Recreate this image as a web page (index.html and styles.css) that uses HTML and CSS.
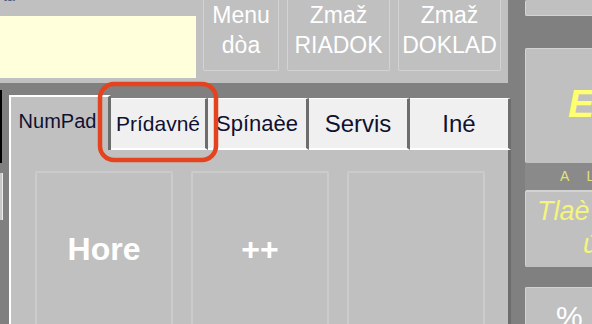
FILE: index.html
```html
<!DOCTYPE html>
<html>
<head>
<meta charset="utf-8">
<link rel="stylesheet" href="styles.css">
</head>
<body>
<div class="screen">
  <div class="main">
    <div class="top">
      <div class="info">
        <div class="caption"><span>ta</span></div>
        <div class="display"></div>
      </div>
      <div class="topbtns">
        <div class="tbtn w76">Menu<br>dòa</div>
        <div class="tbtn w103">Zmaž<br>RIADOK</div>
        <div class="tbtn w103">Zmaž<br>DOKLAD</div>
      </div>
    </div>
    <div class="lower">
      <div class="edge">
        <div class="edge-black"></div>
        <div class="edge-btn"></div>
      </div>
      <div class="tabpanel">
        <div class="tabs">
          <div class="tab active t20">NumPad</div>
          <div class="tab w97 t21">Prídavné</div>
          <div class="tab w101 t22">Spínaèe</div>
          <div class="tab w101 t24">Servis</div>
          <div class="tab w101 t24 last">Iné</div>
        </div>
        <div class="pad">
          <div class="key">Hore</div>
          <div class="key">++</div>
          <div class="key"></div>
        </div>
      </div>
    </div>
  </div>
  <div class="side">
    <div class="sbtn s1"></div>
    <div class="sbtn s2"><span class="big-e">E</span></div>
    <div class="band">A L</div>
    <div class="sbtn s3">
      <div class="tl1">Tlaè</div>
      <div class="tl2">účtu</div>
    </div>
    <div class="sbtn s4"><span class="pct">%</span></div>
  </div>
</div>
<svg class="mark" width="592" height="324" viewBox="0 0 592 324">
  <rect x="100" y="84" width="116" height="76" rx="14" ry="14" fill="none" stroke="#e4431f" stroke-width="4.5"/>
</svg>
</body>
</html>
```

FILE: styles.css
```css
html, body {
  margin: 0;
  padding: 0;
}
body {
  width: 592px;
  height: 324px;
  overflow: hidden;
  background: #808080;
  font-family: "Liberation Sans", Arial, sans-serif;
  position: relative;
}
.screen {
  display: flex;
  width: 592px;
  height: 324px;
  overflow: hidden;
  background: #808080;
}
.main {
  width: 511px;
  flex-shrink: 0;
  display: flex;
  flex-direction: column;
}
.top {
  width: 508px;
  height: 83px;
  flex-shrink: 0;
  background: #c0c0c0;
  display: flex;
  align-items: flex-start;
}
.info {
  width: 196px;
  flex-shrink: 0;
}
.caption {
  height: 16px;
  overflow: hidden;
}
.caption span {
  display: block;
  margin-top: -11px;
  padding-left: 3px;
  font-size: 14px;
  line-height: 14px;
  color: #4f5c86;
}
.display {
  height: 62px;
  background: #ffffdc;
}
.topbtns {
  display: flex;
  gap: 8px;
  margin-left: 7px;
}
.tbtn {
  box-sizing: border-box;
  height: 71px;
  border: 1px solid #d3d3d3;
  border-top: none;
  border-radius: 0 0 2px 2px;
  color: #ffffff;
  font-size: 23px;
  line-height: 30px;
  text-align: center;
  padding-top: 0;
}
.w76 { width: 76px; }
.w103 { width: 103px; }

.lower {
  margin-top: 12px;
  display: flex;
  flex: 1;
}
.edge {
  width: 9px;
  flex-shrink: 0;
  display: flex;
  flex-direction: column;
}
.edge-black {
  width: 2px;
  height: 73px;
  margin-top: -5px;
  flex-shrink: 0;
  background: #000000;
}
.edge-btn {
  width: 2px;
  height: 47px;
  margin-top: 10px;
  flex-shrink: 0;
  background: #c8c8c8;
  border-right: 1px solid #ececec;
}
.tabpanel {
  width: 502px;
  flex-shrink: 0;
  display: flex;
  flex-direction: column;
}
.tabs {
  display: flex;
  height: 55px;
  flex-shrink: 0;
  align-items: flex-end;
}
.tab {
  box-sizing: border-box;
  height: 52px;
  background: #f0f0f0;
  border-top: 1px solid #ffffff;
  border-right: 3px solid #6d6d6d;
  border-bottom: 2px solid #ffffff;
  color: #101030;
  display: flex;
  align-items: center;
  justify-content: center;
  white-space: nowrap;
  padding-top: 1px;
}
.tab.active {
  width: 102px;
  height: 55px;
  background: #c0c0c0;
  border-top: 2px solid #ffffff;
  border-left: 2px solid #ffffff;
  border-bottom: none;
  padding-bottom: 6px;
  padding-right: 4px;
}
.w97 { width: 97px; }
.w101 { width: 101px; }
.t20 { font-size: 20px; }
.t21 { font-size: 21px; }
.t22 { font-size: 22px; }
.t24 { font-size: 24px; }

.pad {
  flex: 1;
  background: #c0c0c0;
  border-left: 2px solid #ffffff;
  border-right: 3px solid #6d6d6d;
  display: flex;
  gap: 18px;
  padding: 21px 23px 0 24px;
}
.key {
  box-sizing: border-box;
  width: 138px;
  height: 156px;
  flex-shrink: 0;
  border: 2px solid #cbcbcb;
  border-radius: 2px;
  display: flex;
  align-items: center;
  justify-content: center;
  color: #ffffff;
  font-size: 32px;
  font-weight: bold;
}

.side {
  margin-left: 14px;
  width: 160px;
  flex-shrink: 0;
  display: flex;
  flex-direction: column;
}
.side > * {
  flex-shrink: 0;
}
.sbtn {
  box-sizing: border-box;
  background: #c0c0c0;
  border-left: 1px solid #d3d3d3;
  border-top: 1px solid #d3d3d3;
  border-radius: 2px;
}
.s1 {
  height: 16px;
  border-top: none;
  border-bottom: 1px solid #d3d3d3;
}
.s2 {
  margin-top: 32px;
  height: 115px;
  padding: 35px 0 0 42px;
}
.big-e {
  display: block;
  font-size: 39px;
  line-height: 39px;
  font-weight: bold;
  font-style: italic;
  color: #ffff70;
}
.band {
  height: 27px;
  background: #8a8a8a;
  color: #e2e27c;
  font-size: 14px;
  line-height: 27px;
  letter-spacing: 7px;
  padding-left: 35px;
}
.s3 {
  height: 77px;
  border-top: 2px solid #d3d3d3;
  color: #f4f47e;
  font-style: italic;
  font-size: 27px;
  line-height: 33px;
  padding-top: 3px;
}
.tl1 { padding-left: 11px; }
.tl2 { padding-left: 57px; }
.s4 {
  margin-top: 20px;
  height: 60px;
  padding: 12px 0 0 30px;
}
.pct {
  color: #ffffff;
  font-size: 30px;
}
.mark {
  position: absolute;
  left: 0;
  top: 0;
  pointer-events: none;
}
```
